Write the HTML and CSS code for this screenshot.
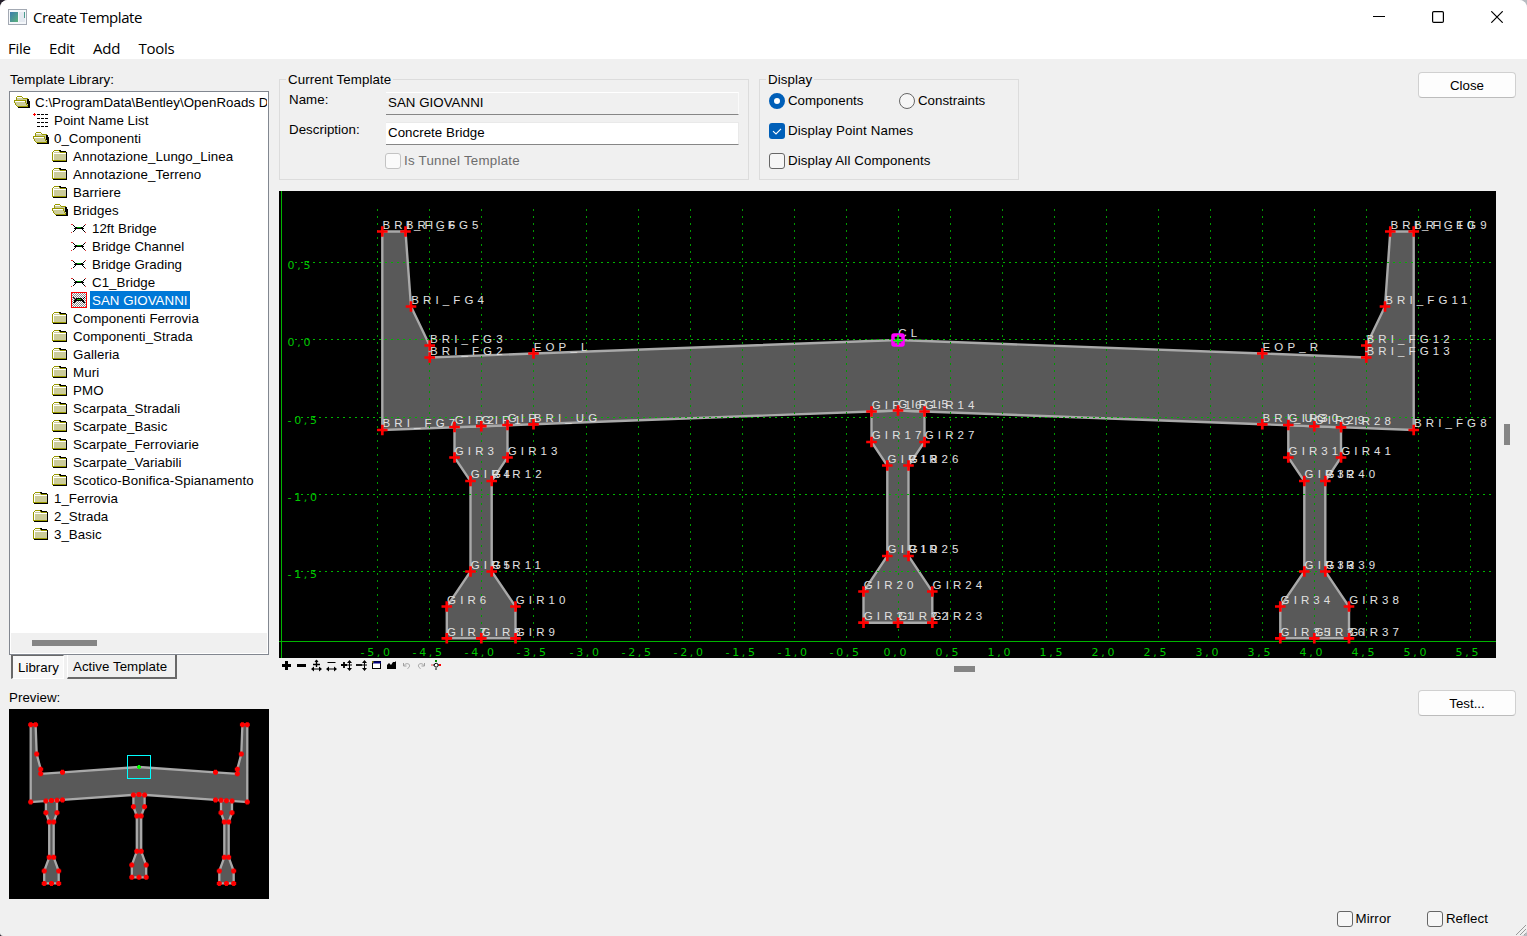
FILE: index.html
```html
<!DOCTYPE html>
<html lang="en">
<head>
<meta charset="utf-8">
<title>Create Template</title>
<link rel="stylesheet" href="styles.css">
</head>
<body>
<svg class="defs" width="0" height="0" aria-hidden="true">
  <symbol id="folder" viewBox="0 0 16 16" shape-rendering="crispEdges">
    <path d="M1 13h14V5h-1v7H1z" fill="#000"/>
    <path d="M1 4h13v9H1z" fill="#cccc99"/>
    <path d="M0 4h1v9H0zM1 3h1v1H1zM2 2h5v1H2zM7 3h1v1H7zM8 4h6v1H8zM1 12h13v1H1z" fill="#999900"/>
    <path d="M2 3h5v1H2zM1 4h1v8H1zM2 5h6v1H2zM8 5h6v1H8z" fill="#fff"/>
    <path d="M7 2h2v1H7zM8 3h6v1H8zM14 4h1v10h-1zM1 13h14v1H1z" fill="#000"/>
  </symbol>
  <symbol id="folder-open" viewBox="0 0 16 16" shape-rendering="crispEdges">
    <path d="M2 3h6l1 1h5v9H4L2 10z" fill="#cccc99"/>
    <path d="M2 3h1v3H2zM3 2h5v1H3zM8 3h1v1H8zM9 4h5v1H9zM0 6h12v1H0zM0 7h1v2H0zM1 9h1v2H1zM2 11h1v1H2zM3 12h11v1H3zM11 7h1v2h-1zM12 9h1v2h-1zM13 11h1v1h-1z" fill="#999900"/>
    <path d="M1 7h10v1H1zM3 3h5v1H3z" fill="#fff"/>
    <path d="M1 8h10v1H1zM2 9h10v2H2zM3 11h10v1H3z" fill="#cccc99"/>
    <path d="M13 5h1v5h-1zM14 5h1v8h-1zM4 13h12v1H4zM15 7h1v6h-1z" fill="#000"/>
  </symbol>
  <symbol id="list" viewBox="0 0 16 16" shape-rendering="crispEdges">
    <path d="M4 2.500h11M4 6.500h11M4 10.500h11M4 14.500h11" stroke="#000" stroke-dasharray="3 1"/>
    <path d="M0 2.500h3M1.500 1v3" stroke="#f00"/>
  </symbol>
  <symbol id="section" viewBox="0 0 16 16" shape-rendering="crispEdges">
    <path d="M2 5.500h1M3 6.500h1M4 7.500h1M4 9.500h1M3 10.500h1M2 11.500h1M3 8.500h10M5 7.500h2M9 7.500h2M11 7.500h1M12 6.500h1M13 5.500h1M11 9.500h1M12 10.500h1M13 11.500h1" stroke="#000"/>
    <path d="M0 4.500h2M14 4.500h1M0 12.500h1M14 12.500h1" stroke="#d33"/>
    <path d="M6 7.500h4" stroke="#0a0"/>
  </symbol>
  <symbol id="section-active" viewBox="0 0 16 16" shape-rendering="crispEdges">
    <rect width="16" height="16" fill="url(#checker)"/>
    <rect x=".5" y=".5" width="15" height="15" fill="none" stroke="#f00"/>
    <path d="M2 5.500h1M3 6.500h1M4 7.500h8M3 8.500h10M5 6.500h6M12 6.500h1M13 5.500h1M3 9.500h2M2 10.500h2M11 9.500h2M12 10.500h2" stroke="#000"/>
    <path d="M6 7.500h4" stroke="#0a0"/>
  </symbol>
  <pattern id="checker" width="2" height="2" patternUnits="userSpaceOnUse">
    <rect width="2" height="2" fill="#fff"/><path d="M0 0h1v1H0zM1 1h1v1H1z" fill="#888"/>
  </pattern>
</svg>

<div class="window">
  <header class="titlebar">
    <svg class="app-icon" width="19" height="16" viewBox="0 0 19 16">
      <defs><linearGradient id="scr" x1="0" y1="0" x2="1" y2="1"><stop offset="0" stop-color="#3a7cae"/><stop offset="1" stop-color="#5cb27a"/></linearGradient></defs>
      <rect x=".5" y=".5" width="18" height="15" fill="#f4f7fa" stroke="#a3a9b3"/>
      <rect x="2" y="3" width="8" height="10" fill="url(#scr)"/>
      <rect x="11" y="3" width="6" height="10" fill="#e4e9f0"/><rect x="16" y="3" width="1" height="6" fill="#4a9c8e"/>
    </svg>
    <h1 class="title">Create Template</h1>
    <div class="caption-buttons">
      <svg width="12" height="12" viewBox="0 0 12 12"><path d="M0 5.500h12" stroke="#000"/></svg>
      <svg width="12" height="12" viewBox="0 0 12 12"><rect x=".6" y=".6" width="10.800" height="10.800" rx="1.200" fill="none" stroke="#000" stroke-width="1.200"/></svg>
      <svg width="12" height="12" viewBox="0 0 12 12"><path d="M.3.3l11.400 11.400M11.700.3L.3 11.700" stroke="#000" stroke-width="1.200"/></svg>
    </div>
  </header>
  <nav class="menubar"><span>File</span><span>Edit</span><span>Add</span><span>Tools</span></nav>

  <div class="body">
    <aside class="side">
      <div class="caption">Template Library:</div>
      <div class="tree">
        <ul class="rows">
          <li class="row d0"><svg><use href="#folder-open"/></svg><span>C:\ProgramData\Bentley\OpenRoads D</span></li>
          <li class="row d1"><svg><use href="#list"/></svg><span>Point Name List</span></li>
          <li class="row d1"><svg><use href="#folder-open"/></svg><span>0_Componenti</span></li>
          <li class="row d2"><svg><use href="#folder"/></svg><span>Annotazione_Lungo_Linea</span></li>
          <li class="row d2"><svg><use href="#folder"/></svg><span>Annotazione_Terreno</span></li>
          <li class="row d2"><svg><use href="#folder"/></svg><span>Barriere</span></li>
          <li class="row d2"><svg><use href="#folder-open"/></svg><span>Bridges</span></li>
          <li class="row d3"><svg><use href="#section"/></svg><span>12ft Bridge</span></li>
          <li class="row d3"><svg><use href="#section"/></svg><span>Bridge Channel</span></li>
          <li class="row d3"><svg><use href="#section"/></svg><span>Bridge Grading</span></li>
          <li class="row d3"><svg><use href="#section"/></svg><span>C1_Bridge</span></li>
          <li class="row d3 selected"><svg><use href="#section-active"/></svg><span>SAN GIOVANNI</span></li>
          <li class="row d2"><svg><use href="#folder"/></svg><span>Componenti Ferrovia</span></li>
          <li class="row d2"><svg><use href="#folder"/></svg><span>Componenti_Strada</span></li>
          <li class="row d2"><svg><use href="#folder"/></svg><span>Galleria</span></li>
          <li class="row d2"><svg><use href="#folder"/></svg><span>Muri</span></li>
          <li class="row d2"><svg><use href="#folder"/></svg><span>PMO</span></li>
          <li class="row d2"><svg><use href="#folder"/></svg><span>Scarpata_Stradali</span></li>
          <li class="row d2"><svg><use href="#folder"/></svg><span>Scarpate_Basic</span></li>
          <li class="row d2"><svg><use href="#folder"/></svg><span>Scarpate_Ferroviarie</span></li>
          <li class="row d2"><svg><use href="#folder"/></svg><span>Scarpate_Variabili</span></li>
          <li class="row d2"><svg><use href="#folder"/></svg><span>Scotico-Bonifica-Spianamento</span></li>
          <li class="row d1"><svg><use href="#folder"/></svg><span>1_Ferrovia</span></li>
          <li class="row d1"><svg><use href="#folder"/></svg><span>2_Strada</span></li>
          <li class="row d1"><svg><use href="#folder"/></svg><span>3_Basic</span></li>
        </ul>
        <div class="tree-scroll"><i></i></div>
      </div>
      <div class="tabs"><span class="tab on">Library</span><span class="tab">Active Template</span></div>
      <div class="preview-label">Preview:</div>
      <svg class="preview" id="preview" width="260" height="190" viewBox="9 709 260 190"></svg>
    </aside>

    <main class="main">
      <div class="top">
        <fieldset class="group current">
          <legend>Current Template</legend>
          <div class="field"><label>Name:</label><div class="input readonly">SAN GIOVANNI</div></div>
          <div class="field"><label>Description:</label><div class="input">Concrete Bridge</div></div>
          <div class="check disabled tunnel"><i class="box"></i><span>Is Tunnel Template</span></div>
        </fieldset>
        <fieldset class="group display">
          <legend>Display</legend>
          <div class="options">
            <div class="radios">
              <div class="check"><i class="radio on"></i><span>Components</span></div>
              <div class="check"><i class="radio"></i><span>Constraints</span></div>
            </div>
            <div class="check"><svg class="box-on" width="16" height="16" viewBox="0 0 16 16"><rect width="16" height="16" rx="3" fill="#005fb8"/><path d="M4 8.200l3 2.700 5-5" fill="none" stroke="#fff" stroke-width="1.100"/></svg><span>Display Point Names</span></div>
            <div class="check"><i class="box"></i><span>Display All Components</span></div>
          </div>
        </fieldset>
        <button class="btn">Close</button>
      </div>
      <div class="stage">
        <svg class="canvas" id="canvas" width="1217" height="467" viewBox="279 191 1217 467"></svg>
        <div class="vscroll"><i></i></div>
      </div>
      <div class="tools">
        <svg width="162" height="14" viewBox="279 659 162 14">
          <g fill="none" stroke="#000" stroke-width="3"><path d="M282 665.500h9M286.500 661v9M297 665.500h9"/></g>
          <g stroke="#000" fill="#000">
            <path d="M313 664.500h7M316.500 660v7" stroke-width="1.400"/><path d="M316.500 659.500l2 2.500h-4z" stroke="none"/>
            <path d="M312 669h9" /><path d="M311 669l3-2.500v5zM322 669l-3-2.500v5z" stroke="none"/>
            <path d="M327.500 662.500h8M327 669h9"/><path d="M326 669l3-2.500v5zM337 669l-3-2.500v5z" stroke="none"/>
            <path d="M341 665h6M344 662v6" stroke-width="1.800"/><path d="M349.500 662v7M347 665h5"/><path d="M349.500 660l2.500 3h-5zM349.500 671l2.500-3h-5z" stroke="none"/>
            <path d="M356 665h6" stroke-width="1.800"/><path d="M364.500 662v7M362 665h5"/><path d="M364.500 660l2.500 3h-5zM364.500 671l2.500-3h-5z" stroke="none"/>
          </g>
          <rect x="372.500" y="661.500" width="8" height="7" fill="#fff" stroke="#000"/><path d="M373 662.500h8" stroke="#000080" stroke-width="2"/><path d="M372 662h1.500" stroke="#ff0"/>
          <path d="M387 669v-4l2-2 2 2 2-3h2l1-1v8z" fill="#000"/>
          <g fill="none" stroke="#a0a0a0"><path d="M403.500 663v3h3M404 665.500c2-3 6-2 5.500.5 0 1-1 2-2 2.500M424.500 663v3h-3M424 665.500c-2-3-6-2-5.500.5 0 1 1 2 2 2.500"/></g>
          <circle cx="436.200" cy="665.200" r="1.900" fill="#fff" stroke="#000"/>
          <path d="M433 665h1M436 668v2M438 665h1" stroke="#000"/><path d="M436 660v2" stroke="#080" stroke-width="2"/><path d="M439 665h2" stroke="#f00" stroke-width="2"/><path d="M431 665h2" stroke="#e44"/>
        </svg>
        <i class="hthumb"></i>
      </div>
      <div class="actions"><button class="btn">Test...</button></div>
      <div class="bottom">
        <div class="check"><i class="box"></i><span>Mirror</span></div>
        <div class="check"><i class="box"></i><span>Reflect</span></div>
      </div>
    </main>
  </div>
  <svg class="grip" width="10" height="10" viewBox="0 0 10 10"><path d="M0 10L10 0M4 10l6-6M8 10l2-2" stroke="#999" stroke-width="1"/></svg>
</div>
<script src="drawing.js"></script>
</body>
</html>
```
FILE: styles.css
```css
* { box-sizing: border-box; }
html, body { margin: 0; height: 100%; }
body {
  background: linear-gradient(90deg, #25202c, #b8bcc2 50%);
  font: 13.3px/18px "Liberation Sans", Arial, sans-serif;
  letter-spacing: 0.04px;
  color: #000;
  overflow: hidden;
}
.defs { position: absolute; }
.window {
  position: relative;
  display: flex;
  flex-direction: column;
  height: 936px;
  background: #f0f0f0;
  border-radius: 8px 8px 6px 3px;
  overflow: hidden;
}
.titlebar { display: flex; align-items: center; height: 36px; padding: 0 24px 0 8px; background: #fff; }
.app-icon { margin: -3px 6px 0 0; }
.title { margin: -2px 0 0; font: 400 15px/20px "Open Sans", "Noto Sans", sans-serif; letter-spacing: -0.45px; }
.caption-buttons { display: flex; gap: 47px; margin-left: auto; margin-top: -2px; }
.caption-buttons svg { display: block; }
.menubar {
  display: flex;
  height: 23px;
  gap: 18.3px;
  padding: 2px 8px 0;
  background: #fff;
  font: 15px/20px "Open Sans", "Noto Sans", sans-serif;
  letter-spacing: -0.25px;
}
.body { display: flex; flex: 1; gap: 10px; padding-left: 9px; }

.side { width: 260px; }
.caption { height: 32px; padding: 12px 1px 0; letter-spacing: 0.12px; }
.tree { display: flex; flex-direction: column; height: 564px; padding: 1px; background: #fff; border: 1px solid #828790; }
.rows { flex: 1; margin: 0; padding: 0; list-style: none; overflow: hidden; }
.row { display: flex; height: 18px; white-space: nowrap; }
.row svg { flex: none; width: 16px; height: 16px; margin: 1px 3px 0 0; }
.row span { height: 18px; line-height: 20px; padding: 0 2px; }
.d0 { padding-left: 3px; }
.d1 { padding-left: 22px; }
.d2 { padding-left: 41px; }
.d3 { padding-left: 60px; }
.d2 span { letter-spacing: 0.09px; }
.selected span { background: #0078d7; color: #fff; }
.tree-scroll { height: 20px; padding: 7px 0 0 21px; background: #f0f0f0; }
.tree-scroll i { display: block; width: 65px; height: 6px; background: #858585; }
.tabs { display: flex; align-items: flex-start; gap: 3px; height: 25px; padding-left: 2px; }
.tab { width: 110px; height: 24px; padding: 3px 4px 0 5px; border: 1px solid; border-color: #fff #696969 #696969 #fff; border-top: 0; border-bottom-width: 2px; border-right-width: 2px; white-space: nowrap; }
.tab.on { width: 53px; padding: 3px 0 0 5px; background: #f8f8f8; border: 1px solid; border-color: #696969 #fff #fff #696969; border-left-width: 2px; }
.preview-label { height: 29px; padding-top: 9px; }
.preview { display: block; background: #000; }

.main { display: flex; flex-direction: column; flex: 1; }
.top { display: flex; align-items: flex-start; height: 132px; padding: 11px 11px 0 0; }
.group { height: 110px; margin: 0; padding: 0; border: 1px solid #dcdcdc; min-width: 0; }
.group legend { height: 18px; margin-left: 6px; padding: 0 2px; line-height: 20px; letter-spacing: 0.1px; }
.current { width: 470px; margin-right: 10px; }
.display { width: 260px; padding-left: 9px; }
.display legend { margin-left: -3px; }
.field { display: flex; height: 30px; padding-left: 9px; }
.field label { width: 97px; margin-top: 3px; }
.input { width: 353px; height: 23px; margin-top: 4px; padding: 1px 2px; background: #fff; border: 1px solid #e9e9e9; border-bottom-color: #868686; border-left-width: 0; }
.input.readonly { background: #f0f0f0; border-color: #fff #fafafa #868686; }
.check { display: flex; align-items: center; height: 18px; white-space: nowrap; letter-spacing: 0.1px; }
.check span { margin-left: 3px; }
.box, .radio { width: 16px; height: 16px; border: 1px solid #666; border-radius: 3px; background: #f6f6f6; }
.box-on { display: block; }
.radio { border-radius: 50%; }
.radio.on { background: #fff; border: 5px solid #005fb8; }
.tunnel { margin: 4px 0 0 105px; letter-spacing: 0.25px; }
.disabled { color: #6d6d6d; }
.disabled .box { border-color: #c3c3c3; background: #fafafa; }
.options { display: flex; flex-direction: column; gap: 12px; padding-top: 4px; }
.radios { display: flex; }
.radios .check:first-child { width: 130px; }
.radios .check { letter-spacing: 0; }
.btn { width: 98px; height: 26px; margin: 2px 0 0 auto; padding: 1px 0 0; font: inherit; color: #000; background: #fdfdfd; border: 1px solid #d0d0d0; border-bottom-color: #bcbcbc; border-radius: 4px; }
.stage { display: flex; height: 467px; }
.canvas { display: block; flex: none; background: #000; letter-spacing: 4.1px; font-family: "Liberation Sans", Arial, sans-serif; }
.canvas .scale { font-family: "DejaVu Sans", sans-serif; font-size: 11px; letter-spacing: 2.7px; fill: #00c800; }
.vscroll { padding: 233px 0 0 8px; }
.vscroll i { display: block; width: 6px; height: 21px; background: #858585; }
.tools { display: flex; height: 31px; padding-top: 1px; }
.tools svg { display: block; }
.hthumb { width: 21px; height: 6px; margin: 7px 0 0 513px; background: #858585; }
.actions { display: flex; height: 30px; padding-right: 11px; }
.actions .btn { margin-top: 1px; }
.bottom { display: flex; justify-content: flex-end; gap: 36px; margin-top: auto; padding: 0 39px 8px 0; }
.grip { position: absolute; right: 1px; bottom: 1px; }
```
FILE: drawing.js
```js
const LEFT = [["GIR2",454.5,427],["GIR3",454.5,457.5],["GIR4",470.5,481],["GIR5",470.5,571.5],["GIR6",446.8,606.5],["GIR7",446.8,638.3],["GIR8",481.3,638.3],["GIR9",515.5,638.3],["GIR10",515.5,606.5],["GIR11",491.7,571.5],["GIR12",491.7,481],["GIR13",507.5,457.5],["GIR",507.5,425],["GIR1",481.3,426.2]];
const MID = [["GIR16",871.5,411.5],["GIR17",871.5,442],["GIR18",887.3,465.5],["GIR19",887.3,556],["GIR20",863.5,591.5],["GIR21",863.5,622.7],["GIR22",898,622.7],["GIR23",932.3,622.7],["GIR24",932.3,591.5],["GIR25",908.5,556],["GIR26",908.5,465.5],["GIR27",924.5,442],["GIR14",924.5,411.5],["GIR15",898,410.5]];
const RIGHT = [["GIR30",1288.3,425],["GIR31",1288.3,457.5],["GIR32",1304.3,481],["GIR33",1304.3,571.5],["GIR34",1280.3,606.5],["GIR35",1280.3,638.3],["GIR36",1314.3,638.3],["GIR37",1349,638.3],["GIR38",1349,606.5],["GIR39",1325.3,571.5],["GIR40",1325.3,481],["GIR41",1341,457.5],["GIR28",1341,427.3],["GIR29",1314.3,426.3]];
const DECK = [["CL",898,340],["EOP_L",533.5,353.5],["BRI_FG2",429.7,357.5],["BRI_FG3",429.7,345.5],["BRI_FG4",411,306.5],["BRI_FG5",405.5,231.5],["BRI_FG6",382.3,231.5],["BRI_FG7",382.3,430],["BRI_UG",533.5,424.3],["",898,410.5],["BRI_UG",1262.3,424.3],["BRI_FG8",1413.7,430],["BRI_FG9",1413.7,231.5],["BRI_FG10",1390.3,231.5],["BRI_FG11",1385,306.5],["BRI_FG12",1366.3,345.5],["BRI_FG13",1366.3,357.5],["EOP_R",1262.3,353.5]];
const SHAPES = [LEFT, MID, RIGHT, DECK];

const poly = (shape, f, w) =>
  `<polygon points="${shape.map(([, x, y]) => f(x, y).join()).join(" ")}" fill="#595959" stroke="#a9a9a9" stroke-width="${w}"/>`;

function drawCanvas() {
  let out = SHAPES.map(s => poly(s, (x, y) => [x, y], 2.4)).join("");
  for (let i = -10; i <= 11; i++) {
    const x = Math.round(898.2 + i * 52.03 - 0.5) + 0.5;
    out += `<path d="M${x} 209V638" stroke="#009a00" stroke-dasharray="2 5"/>`;
    const label = (i / 2).toFixed(1).replace(".", ",");
    const start = i < 0 ? x - 17 : x - 15;
    out += `<text class="scale" x="${start}" y="656">${label}</text>`;
  }
  [262.5, 339.5, 417.5, 494.5, 571.5].forEach((y, i) => {
    out += `<path d="M295 ${y}H1491" stroke="#00b400" stroke-dasharray="2 4"/>`;
    out += `<text class="scale" x="287.500" y="${y + 6.5}">${["0,5","0,0","-0,5","-1,0","-1,5"][i]}</text>`;
  });
  out += `<path d="M281.5 191V658M279 641.500H1496" stroke="#00b400"/>`;
  const points = SHAPES.flat().filter(p => p[0]);
  for (const [name, x, y] of points)
    out += `<text x="${x + .3}" y="${y - 2.7}" fill="#e0e0e0" font-size="11.5">${name}</text>`;
  for (const [name, x, y] of points) {
    if (name === "CL") continue;
    out += `<path d="M${x - 5.3} ${y}h10.600M${x} ${y - 5.3}v10.600" stroke="#f00" stroke-width="2.700"/>`;
  }
  out += `<rect x="893" y="335" width="10" height="10" rx="1" fill="none" stroke="#f0f" stroke-width="3.500"/>`;
  out += `<path d="M893 340.500h10M898 335v10" stroke="#0f0" stroke-width="1.500"/>`;
  document.getElementById("canvas").innerHTML = out;
}

function drawPreview() {
  const f = (x, y) => [+(139 + (x - 898) * 0.21).toFixed(1), +(724.7 + (y - 231.5) * 0.39).toFixed(1)];
  let out = SHAPES.map(s => poly(s, f, 2.3)).join("");
  for (const [name, x, y] of SHAPES.flat()) {
    const [px, py] = f(x, y);
    if (name !== "CL") out += `<path d="M${px - 2.5} ${py}h5M${px} ${py - 2.5}v5" stroke="#f00" stroke-width="3"/>`;
  }
  out += `<path d="M137 767h4M139 765v4" stroke="#0f0" stroke-width="2"/>`;
  out += `<rect x="127.500" y="755.500" width="23" height="23" fill="none" stroke="#0ff"/>`;
  document.getElementById("preview").innerHTML = out;
}

drawCanvas();
drawPreview();
```
